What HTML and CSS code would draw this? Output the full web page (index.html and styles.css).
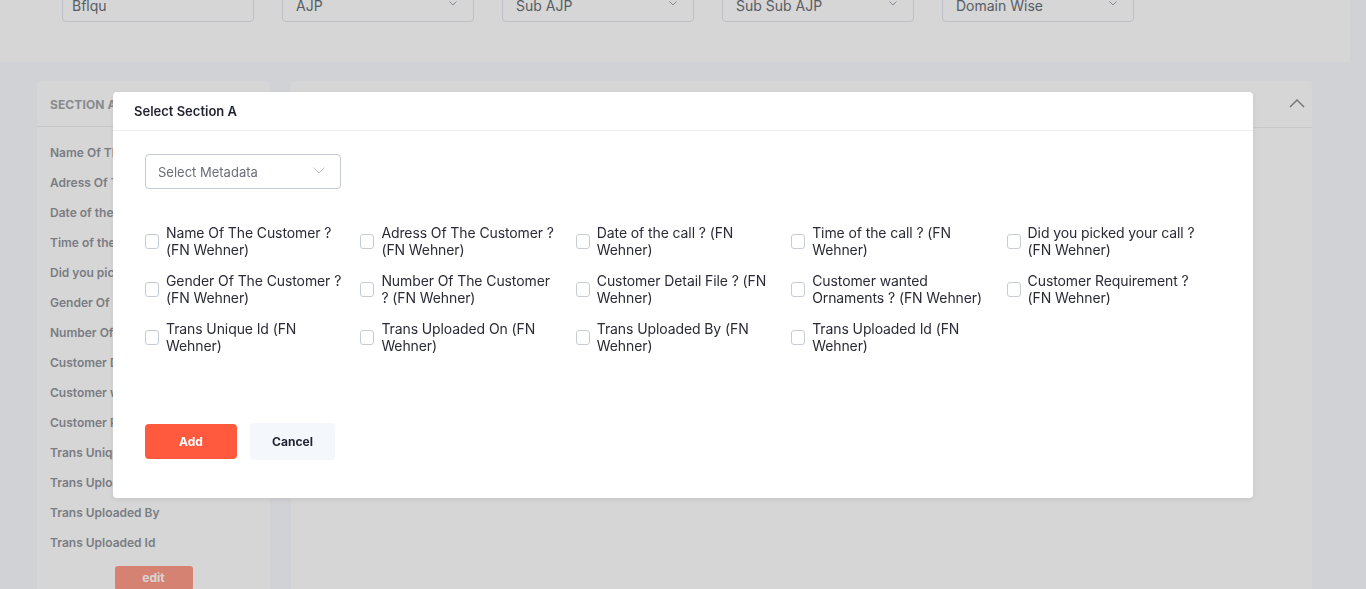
FILE: index.html
```html
<!DOCTYPE html>
<html lang="en">
<head>
<meta charset="utf-8">
<title>Select Section A</title>
<link rel="stylesheet" href="styles.css">
</head>
<body>
<div class="page">
  <div class="topbar">
    <div class="field input">Bflqu</div>
    <div class="field select">AJP<span class="caret"><svg width="8" height="5" viewBox="0 0 8 5"><path d="M0.5 0.5 L4 4 L7.5 0.5" fill="none" stroke="#9ca3af" stroke-width="1"/></svg></span></div>
    <div class="field select">Sub AJP<span class="caret"><svg width="8" height="5" viewBox="0 0 8 5"><path d="M0.5 0.5 L4 4 L7.5 0.5" fill="none" stroke="#9ca3af" stroke-width="1"/></svg></span></div>
    <div class="field select">Sub Sub AJP<span class="caret"><svg width="8" height="5" viewBox="0 0 8 5"><path d="M0.5 0.5 L4 4 L7.5 0.5" fill="none" stroke="#9ca3af" stroke-width="1"/></svg></span></div>
    <div class="field select">Domain Wise<span class="caret"><svg width="8" height="5" viewBox="0 0 8 5"><path d="M0.5 0.5 L4 4 L7.5 0.5" fill="none" stroke="#9ca3af" stroke-width="1"/></svg></span></div>
  </div>

  <div class="main">
    <aside class="card side">
      <div class="card-head">SECTION A</div>
      <ul class="side-list">
        <li>Name Of The Customer ?</li>
        <li>Adress Of The Customer ?</li>
        <li>Date of the call ?</li>
        <li>Time of the call ?</li>
        <li>Did you picked your call ?</li>
        <li>Gender Of The Customer ?</li>
        <li>Number Of The Customer ?</li>
        <li>Customer Detail File ?</li>
        <li>Customer wanted Ornaments ?</li>
        <li>Customer Requirement ?</li>
        <li>Trans Unique Id</li>
        <li>Trans Uploaded On</li>
        <li>Trans Uploaded By</li>
        <li>Trans Uploaded Id</li>
      </ul>
      <div class="edit-wrap"><button class="edit-btn">edit</button></div>
    </aside>
    <section class="card content">
      <div class="card-head right-head">
        <svg width="16" height="10" viewBox="0 0 16 10"><path d="M1 9 L8 2 L15 9" fill="none" stroke="#8a8a8a" stroke-width="1.4"/></svg>
      </div>
    </section>
  </div>
</div>

<div class="overlay"></div>

<div class="modal" role="dialog">
  <div class="modal-head">Select Section A</div>
  <div class="modal-body">
    <div class="meta-select">
      <span>Select Metadata</span>
      <svg width="12" height="7" viewBox="0 0 12 7"><path d="M0.5 0.5 L6 6 L11.5 0.5" fill="none" stroke="#c2c6cf" stroke-width="1"/></svg>
    </div>
    <div class="check-grid">
      <label class="check"><span class="box"></span><span class="txt">Name Of The Customer ? (FN Wehner)</span></label>
      <label class="check"><span class="box"></span><span class="txt">Adress Of The Customer ? (FN Wehner)</span></label>
      <label class="check"><span class="box"></span><span class="txt">Date of the call ? (FN Wehner)</span></label>
      <label class="check"><span class="box"></span><span class="txt">Time of the call ? (FN Wehner)</span></label>
      <label class="check"><span class="box"></span><span class="txt">Did you picked your call ? (FN Wehner)</span></label>
      <label class="check"><span class="box"></span><span class="txt">Gender Of The Customer ? (FN Wehner)</span></label>
      <label class="check"><span class="box"></span><span class="txt">Number Of The Customer ? (FN Wehner)</span></label>
      <label class="check"><span class="box"></span><span class="txt">Customer Detail File ? (FN Wehner)</span></label>
      <label class="check"><span class="box"></span><span class="txt">Customer wanted Ornaments ? (FN Wehner)</span></label>
      <label class="check"><span class="box"></span><span class="txt">Customer Requirement ? (FN Wehner)</span></label>
      <label class="check"><span class="box"></span><span class="txt">Trans Unique Id (FN Wehner)</span></label>
      <label class="check"><span class="box"></span><span class="txt">Trans Uploaded On (FN Wehner)</span></label>
      <label class="check"><span class="box"></span><span class="txt">Trans Uploaded By (FN Wehner)</span></label>
      <label class="check"><span class="box"></span><span class="txt">Trans Uploaded Id (FN Wehner)</span></label>
    </div>
    <div class="actions">
      <button class="btn btn-add">Add</button>
      <button class="btn btn-cancel">Cancel</button>
    </div>
  </div>
</div>
</body>
</html>
```

FILE: styles.css
```css
* { box-sizing: border-box; }

html, body {
  margin: 0;
  padding: 0;
  height: 100%;
  overflow: hidden;
}

body {
  background: #fafbff;
  font-family: Inter, "Noto Sans", "Liberation Sans", sans-serif;
}

.page {
  width: 1366px;
  height: 589px;
  overflow: hidden;
}

.topbar {
  width: 1350px;
  height: 62px;
  background: #ffffff;
  display: flex;
  align-items: flex-start;
  gap: 28px;
  padding-left: 62px;
  overflow: hidden;
}

.field {
  width: 192px;
  height: 34px;
  margin-top: -12px;
  border: 1px solid #e3e6eb;
  border-radius: 4px;
  display: flex;
  align-items: center;
  justify-content: space-between;
  padding: 0 16px 0 13px;
  font-size: 14px;
  color: #6b6f78;
}

.input { padding-left: 9px; }

.caret {
  display: flex;
  align-items: center;
  margin-top: -4px;
}

.main {
  display: flex;
  gap: 21px;
  padding-left: 37px;
  margin-top: 19px;
}

.card {
  background: #ffffff;
  border-radius: 4px 4px 0 0;
  height: 508px;
}

.side {
  width: 233px;
}

.content {
  width: 1021px;
}

.card-head {
  height: 46px;
  border-bottom: 1px solid #eeeeee;
  display: flex;
  align-items: center;
  padding: 1px 13px 0;
  font-size: 12px;
  font-weight: 700;
  color: #a2a5ab;
  letter-spacing: 0.1px;
}

.right-head {
  height: 47px;
  justify-content: flex-end;
  padding-right: 7px;
}

.right-head svg { margin-top: -4px; }

.side-list {
  list-style: none;
  margin: 0;
  padding: 11px 0 0 13px;
}

.side-list li {
  height: 30px;
  line-height: 30px;
  font-size: 12px;
  font-weight: 600;
  color: #92959c;
  white-space: nowrap;
  overflow: hidden;
}

.edit-wrap {
  display: flex;
  justify-content: center;
  padding-top: 8px;
}

.edit-btn {
  width: 78px;
  height: 24px;
  border: 0;
  border-radius: 3px;
  background: #ff5a3d;
  opacity: 0.6;
  color: #fff;
  font-family: inherit;
  font-size: 12px;
  font-weight: 700;
  padding: 0 0 2px;
}

.overlay {
  position: fixed;
  inset: 0;
  background: rgba(0, 0, 0, 0.16);
}

.modal {
  position: fixed;
  left: 113px;
  top: 92px;
  width: 1140px;
  height: 406px;
  background: #ffffff;
  border-radius: 4px;
  box-shadow: 0 2px 6px rgba(0, 0, 0, 0.08);
}

.modal-head {
  height: 39px;
  border-bottom: 1px solid #eceef1;
  display: flex;
  align-items: center;
  padding: 0 21px 1px;
  font-size: 13px;
  font-weight: 600;
  color: #1f2230;
}

.modal-body {
  padding: 23px 31px 0 32px;
}

.meta-select {
  width: 196px;
  height: 35px;
  border: 1px solid #c5cad6;
  border-radius: 4px;
  display: flex;
  align-items: center;
  justify-content: space-between;
  padding: 0 15px 0 12px;
  font-size: 13px;
  color: #6b6f78;
}

.meta-select svg { margin-top: -3px; }

.check-grid {
  margin-top: 35px;
  display: grid;
  grid-template-columns: repeat(5, 1fr);
  row-gap: 14px;
}

.check {
  display: flex;
  align-items: center;
  gap: 7px;
  min-height: 34px;
}

.box {
  flex: none;
  width: 14px;
  height: 15px;
  border: 1px solid #c7cbd4;
  border-radius: 3px;
  background: #fff;
}

.txt {
  max-width: 179px;
  font-size: 14px;
  line-height: 17px;
  color: #2a2b36;
  letter-spacing: -0.1px;
}

.actions {
  display: flex;
  align-items: center;
  gap: 13px;
  margin-top: 69px;
}

.btn {
  border: 0;
  border-radius: 4px;
  font-family: inherit;
  font-size: 12px;
  font-weight: 700;
  cursor: pointer;
}

.btn-add {
  width: 92px;
  height: 35px;
  background: #ff5a3d;
  color: #ffffff;
}

.btn-cancel {
  width: 85px;
  height: 37px;
  background: #f4f7fc;
  color: #1f2230;
}
```
